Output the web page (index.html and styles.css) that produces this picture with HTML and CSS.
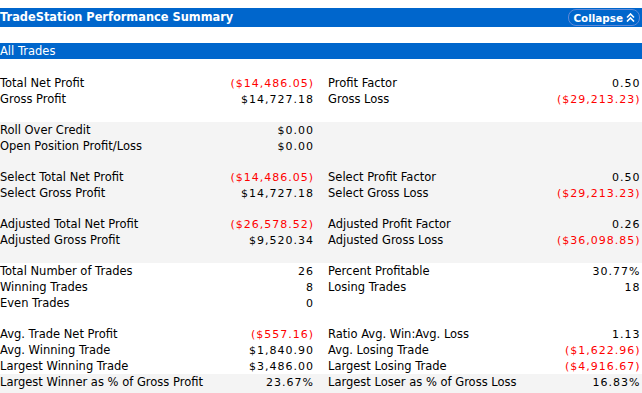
FILE: index.html
```html
<!DOCTYPE html>
<html>
<head>
<meta charset="utf-8">
<title>TradeStation Performance Summary</title>
<link rel="stylesheet" href="styles.css">
</head>
<body>
<div class="page">
  <div class="titlebar">
    <span class="title">TradeStation Performance Summary</span>
    <span class="collapse">Collapse
      <svg class="chev" width="9" height="9" viewBox="0 0 9 9"><polyline points="1,4.5 4.5,1 8,4.5" /><polyline points="1,8.5 4.5,5 8,8.5" /></svg>
    </span>
  </div>
  <div class="subbar">All Trades</div>

  <div class="section white first">
    <div class="row"><div class="half left"><span class="lbl">Total Net Profit</span><span class="val neg">($14,486.05)</span></div><div class="half right"><span class="lbl">Profit Factor</span><span class="val">0.50</span></div></div>
    <div class="row"><div class="half left"><span class="lbl">Gross Profit</span><span class="val">$14,727.18</span></div><div class="half right"><span class="lbl">Gross Loss</span><span class="val neg">($29,213.23)</span></div></div>
    <div class="spacer"></div>
  </div>

  <div class="section gray">
    <div class="row"><div class="half left"><span class="lbl">Roll Over Credit</span><span class="val">$0.00</span></div><div class="half right"></div></div>
    <div class="row"><div class="half left"><span class="lbl">Open Position Profit/Loss</span><span class="val">$0.00</span></div><div class="half right"></div></div>
    <div class="spacer"></div>
    <div class="row"><div class="half left"><span class="lbl">Select Total Net Profit</span><span class="val neg">($14,486.05)</span></div><div class="half right"><span class="lbl">Select Profit Factor</span><span class="val">0.50</span></div></div>
    <div class="row"><div class="half left"><span class="lbl">Select Gross Profit</span><span class="val">$14,727.18</span></div><div class="half right"><span class="lbl">Select Gross Loss</span><span class="val neg">($29,213.23)</span></div></div>
    <div class="spacer"></div>
    <div class="row"><div class="half left"><span class="lbl">Adjusted Total Net Profit</span><span class="val neg">($26,578.52)</span></div><div class="half right"><span class="lbl">Adjusted Profit Factor</span><span class="val">0.26</span></div></div>
    <div class="row"><div class="half left"><span class="lbl">Adjusted Gross Profit</span><span class="val">$9,520.34</span></div><div class="half right"><span class="lbl">Adjusted Gross Loss</span><span class="val neg">($36,098.85)</span></div></div>
    <div class="spacer"></div>
  </div>

  <div class="section white">
    <div class="row"><div class="half left"><span class="lbl">Total Number of Trades</span><span class="val">26</span></div><div class="half right"><span class="lbl">Percent Profitable</span><span class="val">30.77%</span></div></div>
    <div class="row"><div class="half left"><span class="lbl">Winning Trades</span><span class="val">8</span></div><div class="half right"><span class="lbl">Losing Trades</span><span class="val">18</span></div></div>
    <div class="row"><div class="half left"><span class="lbl">Even Trades</span><span class="val">0</span></div><div class="half right"></div></div>
    <div class="spacer"></div>
    <div class="row"><div class="half left"><span class="lbl">Avg. Trade Net Profit</span><span class="val neg">($557.16)</span></div><div class="half right"><span class="lbl">Ratio Avg. Win:Avg. Loss</span><span class="val">1.13</span></div></div>
    <div class="row"><div class="half left"><span class="lbl">Avg. Winning Trade</span><span class="val">$1,840.90</span></div><div class="half right"><span class="lbl">Avg. Losing Trade</span><span class="val neg">($1,622.96)</span></div></div>
    <div class="row"><div class="half left"><span class="lbl">Largest Winning Trade</span><span class="val">$3,486.00</span></div><div class="half right"><span class="lbl">Largest Losing Trade</span><span class="val neg">($4,916.67)</span></div></div>
  </div>

  <div class="section gray last">
    <div class="row"><div class="half left"><span class="lbl">Largest Winner as % of Gross Profit</span><span class="val">23.67%</span></div><div class="half right"><span class="lbl">Largest Loser as % of Gross Loss</span><span class="val">16.83%</span></div></div>
  </div>
</div>
</body>
</html>
```
FILE: styles.css
```css
html, body {
  margin: 0;
  padding: 0;
  background: #ffffff;
}
body {
  padding-top: 8px;
  font-family: "DejaVu Sans", Verdana, sans-serif;
  font-size: 11.5px;
  color: #000000;
  overflow: hidden;
}
.page {
  width: 642px;
}
.titlebar {
  height: 19px;
  background: #0066cc;
  color: #ffffff;
  display: flex;
  align-items: center;
  justify-content: space-between;
}
.title {
  font-weight: bold;
  font-size: 11.4px;
  line-height: 19px;
}
.collapse {
  box-sizing: border-box;
  height: 17px;
  margin-right: 2px;
  padding: 0 4px 0 4px;
  border: 1.5px solid #5f8ad8;
  border-radius: 8px;
  display: flex;
  align-items: center;
  gap: 3px;
  font-weight: bold;
  font-size: 10.4px;
  line-height: 14px;
}
.chev {
  display: block;
}
.chev polyline {
  fill: none;
  stroke: #ffffff;
  stroke-width: 1.6;
}
.subbar {
  margin-top: 16px;
  height: 16px;
  line-height: 16px;
  background: #0066cc;
  color: #ffffff;
}
.section.white { background: #ffffff; }
.section.gray { background: #f4f4f4; }
.section.first { padding-top: 16px; }
.section.last { padding-bottom: 8px; }
.spacer { height: 15px; }
.row {
  display: flex;
  height: 16px;
  line-height: 17px;
}
.half {
  display: flex;
  justify-content: space-between;
  box-sizing: border-box;
}
.half.left {
  width: 320px;
  padding-right: 6px;
}
.half.right {
  width: 322px;
  padding-left: 8px;
  padding-right: 1.5px;
}
.lbl {
  white-space: nowrap;
}
.val {
  font-size: 11px;
  letter-spacing: 1px;
  white-space: nowrap;
}
.val.neg { color: #ff0000; }
```
